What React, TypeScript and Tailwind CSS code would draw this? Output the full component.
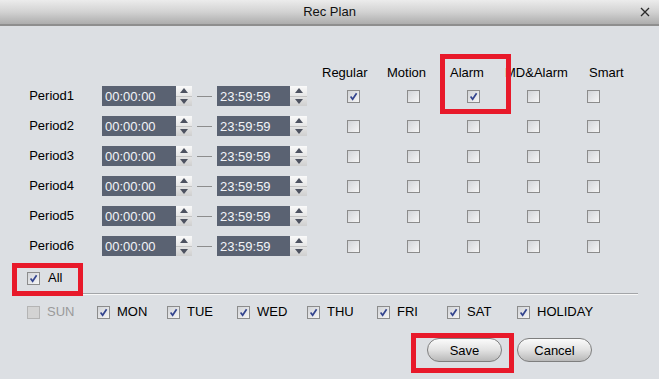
import React, { useState } from "react";

type Plan = { start: string; end: string; checks: boolean[] };

const initialPeriods: Plan[] = [
  { start: "00:00:00", end: "23:59:59", checks: [true, false, true, false, false] },
  { start: "00:00:00", end: "23:59:59", checks: [false, false, false, false, false] },
  { start: "00:00:00", end: "23:59:59", checks: [false, false, false, false, false] },
  { start: "00:00:00", end: "23:59:59", checks: [false, false, false, false, false] },
  { start: "00:00:00", end: "23:59:59", checks: [false, false, false, false, false] },
  { start: "00:00:00", end: "23:59:59", checks: [false, false, false, false, false] },
];

const days = ["SUN", "MON", "TUE", "WED", "THU", "FRI", "SAT", "HOLIDAY"];

const CheckBox = ({
  checked,
  disabled,
  onClick,
}: {
  checked: boolean;
  disabled?: boolean;
  onClick?: () => void;
}) => (
  <span
    onClick={disabled ? undefined : onClick}
    className={
      disabled
        ? "w-[13px] h-[13px] border border-[#b4b4b4] bg-[#d3d3d3] flex items-center justify-center shrink-0"
        : "w-[13px] h-[13px] border border-[#8c8c8c] bg-gradient-to-br from-[#d2d4d8] to-[#f6f6f6] flex items-center justify-center shrink-0 cursor-pointer"
    }
  >
    {checked && (
      <svg width="9" height="9" viewBox="0 0 9 9">
        <path d="M1.6 4.6 L3.6 7.2 L7.6 1.2" stroke="#33448e" strokeWidth="1.7" fill="none" />
      </svg>
    )}
  </span>
);

const Spinner = ({ w }: { w: string }) => (
  <div className={`${w} h-[20px] flex flex-col bg-gradient-to-b from-[#fafafa] via-[#e6e6e6] to-[#cfcfcf]`}>
    <div className="flex-1 flex items-center justify-center border-b border-[#c4c4c4]">
      <svg width="8" height="5" viewBox="0 0 8 5">
        <path d="M4 0 L8 5 L0 5 Z" fill="#4d5260" />
      </svg>
    </div>
    <div className="flex-1 flex items-center justify-center">
      <svg width="8" height="5" viewBox="0 0 8 5">
        <path d="M0 0 L8 0 L4 5 Z" fill="#4d5260" />
      </svg>
    </div>
  </div>
);

const TimeBox = ({ value, w }: { value: string; w: string }) => (
  <div className={`${w} h-[20px] bg-[#5a6272] text-[#f2f4f8] pl-[3px] flex items-center leading-none`}>
    {value}
  </div>
);

export default function App() {
  const [periods, setPeriods] = useState<Plan[]>(initialPeriods);
  const [all, setAll] = useState(true);
  const [dayChecks, setDayChecks] = useState<boolean[]>([false, true, true, true, true, true, true, true]);

  const toggle = (row: number, col: number) => {
    setPeriods((prev) =>
      prev.map((p, i) =>
        i === row ? { ...p, checks: p.checks.map((c, j) => (j === col ? !c : c)) } : p
      )
    );
  };

  return (
    <div className="w-[659px] h-[379px] relative overflow-hidden bg-[#dcdfe3] text-[13px] text-black font-['Liberation_Sans',Arial,sans-serif]">
      {/* title bar */}
      <div className="h-[26px] grid grid-cols-[1fr_auto_1fr] items-center bg-gradient-to-b from-[#ececec] via-[#d2d2d2] to-[#adadad] border-b-2 border-[#8e8e8e]">
        <div />
        <div className="text-[13px] text-[#111]">Rec Plan</div>
        <div className="flex justify-end pr-[9px]">
          <svg width="10" height="10" viewBox="0 0 10 10">
            <path d="M1 1 L9 9 M9 1 L1 9" stroke="#2a2a2a" strokeWidth="1.3" />
          </svg>
        </div>
      </div>

      <div className="pt-[39px]">
        {/* column header */}
        <div className="flex h-[16px] items-center pl-[322px]">
          <div className="w-[65px]">Regular</div>
          <div className="w-[63px]">Motion</div>
          <div className="w-[55px]">Alarm</div>
          <div className="w-[84px]">MD&amp;Alarm</div>
          <div>Smart</div>
        </div>

        {periods.map((p, i) => (
          <div key={i} className="flex h-[30px] items-center">
            <div className="w-[74px] text-right">Period{i + 1}</div>
            <div className="ml-[28px] flex items-center">
              <TimeBox value={p.start} w="w-[74px]" />
              <Spinner w="w-[16px]" />
              <div className="w-[25px] flex items-center">
                <div className="ml-[5px] w-[15px] h-px bg-[#8d8d8d]" />
              </div>
              <TimeBox value={p.end} w="w-[73px]" />
              <Spinner w="w-[17px]" />
            </div>
            <div className="ml-[16px] flex">
              {p.checks.map((c, j) => (
                <div key={j} className="w-[60px] flex justify-center">
                  <CheckBox checked={c} onClick={() => toggle(i, j)} />
                </div>
              ))}
            </div>
          </div>
        ))}

        {/* all */}
        <div className="mt-[2px] h-[30px] flex items-center pl-[27px] gap-[8px]">
          <CheckBox checked={all} onClick={() => setAll(!all)} />
          <span>All</span>
        </div>

        <div className="ml-[12px] w-[626px] h-[2px] border-t border-[#a3a5a8] bg-[#f8f8f8]" />

        {/* days */}
        <div className="mt-[2px] h-[30px] flex items-center pl-[27px]">
          {days.map((d, i) => (
            <div key={d} className="w-[70px] flex items-center gap-[7px]">
              <CheckBox
                checked={dayChecks[i]}
                disabled={i === 0}
                onClick={() => setDayChecks((prev) => prev.map((c, j) => (j === i ? !c : c)))}
              />
              <span className={i === 0 ? "text-[#9a9a9a]" : ""}>{d}</span>
            </div>
          ))}
        </div>

        {/* buttons */}
        <div className="mt-[11px] flex justify-end gap-[15px] pr-[67px]">
          <button className="w-[75px] h-[24px] rounded-full border border-[#7e7e7e] bg-gradient-to-b from-[#fbfbfb] via-[#e2e2e2] to-[#b9b9b9] text-[13px] leading-none text-black">
            Save
          </button>
          <button className="w-[75px] h-[24px] rounded-full border border-[#7e7e7e] bg-gradient-to-b from-[#fbfbfb] via-[#e2e2e2] to-[#b9b9b9] text-[13px] leading-none text-black">
            Cancel
          </button>
        </div>
      </div>

      {/* red highlight marks */}
      <div className="absolute left-[440px] top-[54px] w-[71px] h-[60px] border-[5px] border-[#e8192a] pointer-events-none" />
      <div className="absolute left-[12px] top-[263px] w-[71px] h-[33px] border-[5px] border-[#e8192a] pointer-events-none" />
      <div className="absolute left-[411px] top-[333px] w-[103px] h-[40px] border-[5px] border-[#e8192a] pointer-events-none" />
    </div>
  );
}
